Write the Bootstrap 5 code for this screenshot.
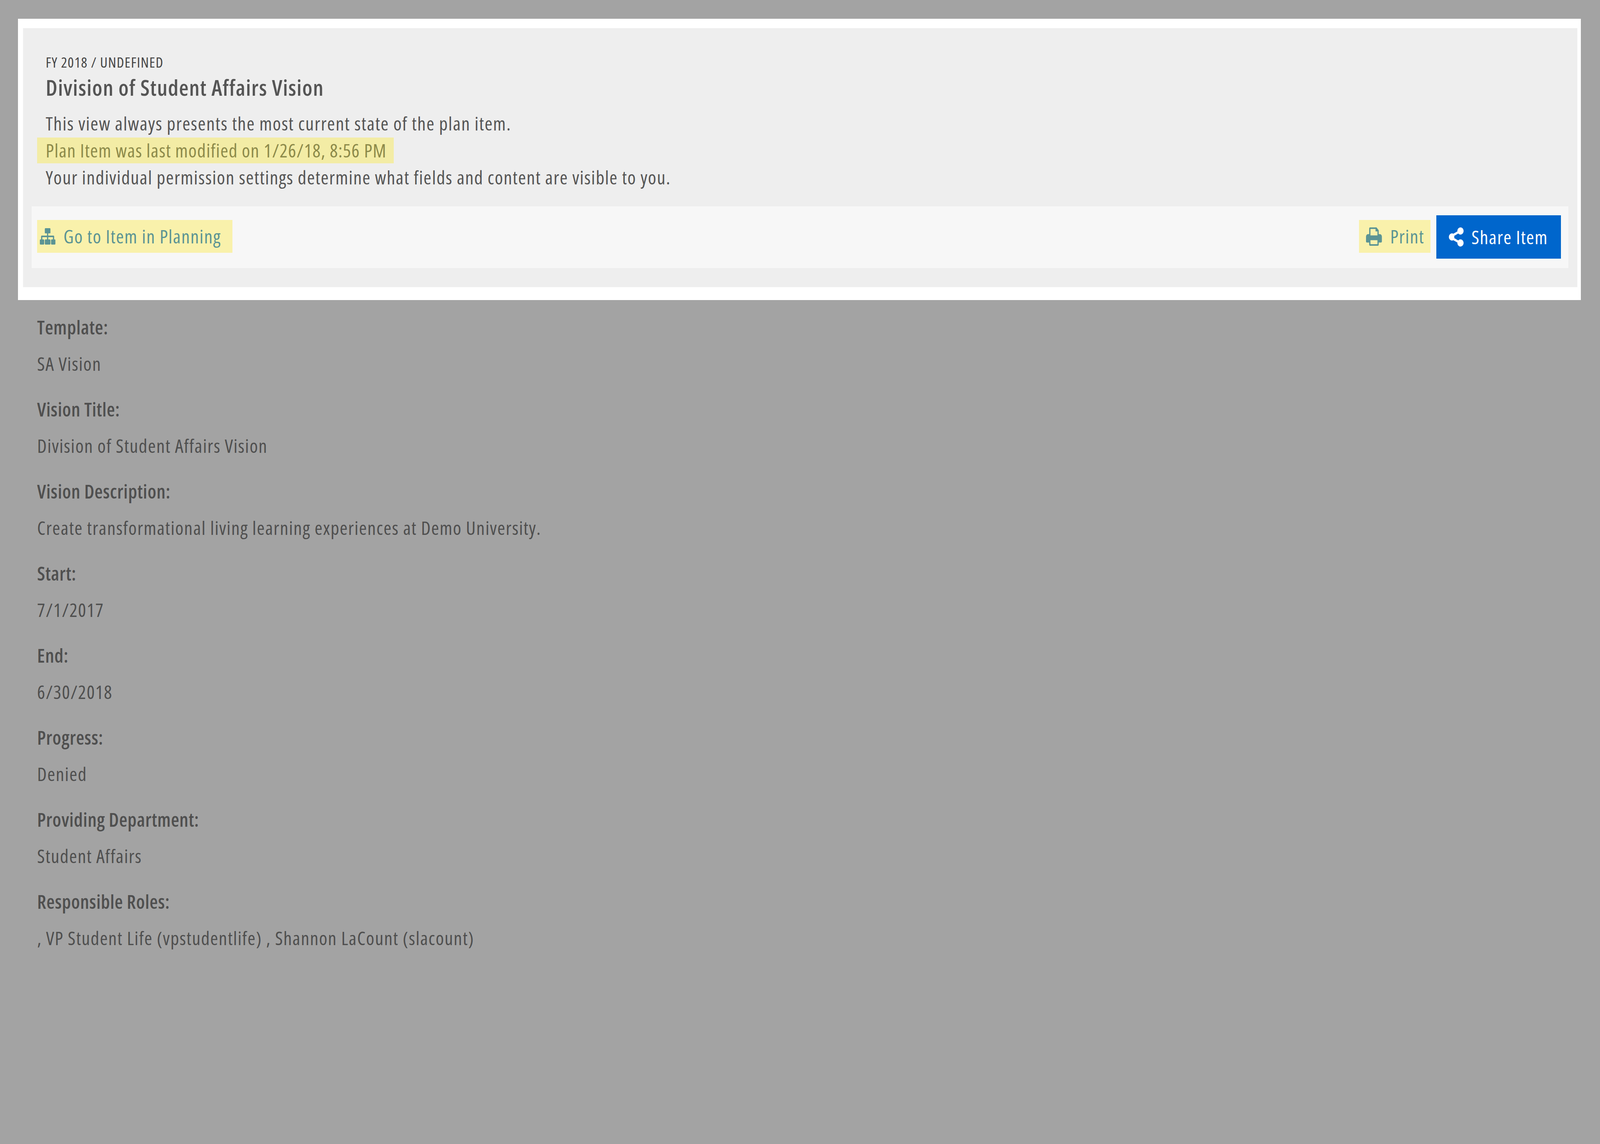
<!DOCTYPE html>
<html lang="en"><head><meta charset="utf-8"><title>Plan Item</title>
<link href="https://cdn.jsdelivr.net/npm/bootstrap@5.3.0/dist/css/bootstrap.min.css" rel="stylesheet">
<style>
html,body{height:100%}
body{background:#a3a3a3;font-family:"Open Sans","Liberation Sans",sans-serif;font-size:48px;font-stretch:81%;letter-spacing:1.67px;line-height:69.5px;color:#4f4f4f;margin:0;overflow-x:hidden}
.sheet{margin:48px 1.19vw 0 1.131vw;background:#fff;padding:24px .238vw 33px .298vw;height:720px}
.head-box{background:#eee;height:663px;padding:62px .556vw 0 .556vw}
.crumb{font-size:36.7px;line-height:50px;letter-spacing:1.5px;color:#444;margin-left:.873vw}
.heading{font-size:56px;line-height:78px;font-weight:600;font-stretch:81%;letter-spacing:1.46px;color:#555;margin:0 0 2px .873vw}
.notes{margin-top:21px;color:#555;padding-left:.337vw}
.notes p{margin:0;padding-left:.536vw;height:69px;line-height:66px}
.notes .lead-note{letter-spacing:1.79px}
.notes .hit{background:#f3eca5;color:#8d8a4a;width:22.3vw;height:66px;margin-bottom:3px;letter-spacing:1.39px}
.tool-bar{background:#f7f7f7;height:158px;margin-top:38px;padding:23px .456vw 0 .337vw}
.hl-link{background:#f9f1ab;color:#5b9494;text-decoration:none;height:84px;line-height:82px;display:flex;align-items:center;margin-top:12px}
.go-link{width:12.2vw;padding-left:.179vw}
.go-ico{width:.972vw;height:42px;margin-right:.496vw}
.print-link{width:4.464vw;padding-left:.437vw}
.print-ico{width:.992vw;height:47px;margin-right:.516vw}
.tool-end{gap:.357vw}
.share-btn{background:#0066cc;color:#fff;border:0;border-radius:0;width:7.798vw;height:111px;font-size:48px;font-stretch:81%;letter-spacing:1.67px;white-space:nowrap;padding:0 0 0 .734vw;display:flex;align-items:center;line-height:1}
.share-btn:hover{background:#0066cc;color:#fff}
.share-ico{width:.992vw;height:49px;margin-right:.476vw}
.ico{fill:currentColor;flex:none}
.fields{padding:0 0 0 2.321vw;color:#4f4f4f}
.fld{height:210px;padding-top:35px}
.fld dt{font-weight:600;letter-spacing:.75px;line-height:70px;margin:0;height:93px}
.fld dd{margin:0;line-height:70px}
</style></head>
<body>
<div class="sheet">
 <div class="head-box">
  <div class="crumb">FY 2018 / UNDEFINED</div>
  <h1 class="heading">Division of Student Affairs Vision</h1>
  <div class="notes">
   <p class="lead-note">This view always presents the most current state of the plan item.</p>
   <p class="hit">Plan Item was last modified on 1/26/18, 8:56 PM</p>
   <p>Your individual permission settings determine what fields and content are visible to you.</p>
  </div>
  <div class="tool-bar d-flex justify-content-between align-items-start">
   <a class="hl-link go-link" href="#"><svg class="ico go-ico" preserveAspectRatio="none" viewBox="0 0 50 44"><path d="M18 0h14a2 2 0 0 1 2 2v10a2 2 0 0 1-2 2h-5v6h17a2 2 0 0 1 2 2v8h2a2 2 0 0 1 2 2v10a2 2 0 0 1-2 2H38a2 2 0 0 1-2-2V32a2 2 0 0 1 2-2h4v-6H27v6h5a2 2 0 0 1 2 2v10a2 2 0 0 1-2 2H18a2 2 0 0 1-2-2V32a2 2 0 0 1 2-2h5v-6H8v6h4a2 2 0 0 1 2 2v10a2 2 0 0 1-2 2H2a2 2 0 0 1-2-2V32a2 2 0 0 1 2-2h2v-8a2 2 0 0 1 2-2h17v-6h-5a2 2 0 0 1-2-2V2a2 2 0 0 1 2-2z"/></svg><span>Go to Item in Planning</span></a>
   <div class="d-flex align-items-start tool-end">
    <a class="hl-link print-link" href="#"><svg class="ico print-ico" preserveAspectRatio="none" viewBox="0 0 50 46"><path fill-rule="evenodd" d="M10 3a3 3 0 0 1 3-3h20l7 7v10h4a6 6 0 0 1 6 6v12a3 3 0 0 1-3 3h-7v5a3 3 0 0 1-3 3H13a3 3 0 0 1-3-3v-5H3a3 3 0 0 1-3-3V23a6 6 0 0 1 6-6h4zm4 1v16h22V10h-6V4zm0 28v10h22V32z"/></svg><span>Print</span></a>
    <button class="btn share-btn" type="button"><svg class="ico share-ico" preserveAspectRatio="none" viewBox="0 0 46 48"><path d="M36 0a9 9 0 1 1-6.400 15.300L17.800 21.200a9 9 0 0 1 0 5.600l11.800 5.900a9 9 0 1 1-2.500 5.300L15.300 32.100a9 9 0 1 1 0-16.200l11.800-5.900A9 9 0 0 1 36 0z"/></svg><span>Share Item</span></button>
   </div>
  </div>
 </div>
</div>
<dl class="fields m-0">
 <div class="fld"><dt>Template:</dt><dd>SA Vision</dd></div>
 <div class="fld"><dt>Vision Title:</dt><dd>Division of Student Affairs Vision</dd></div>
 <div class="fld"><dt>Vision Description:</dt><dd>Create transformational living learning experiences at Demo University.</dd></div>
 <div class="fld"><dt>Start:</dt><dd>7/1/2017</dd></div>
 <div class="fld"><dt>End:</dt><dd>6/30/2018</dd></div>
 <div class="fld"><dt>Progress:</dt><dd>Denied</dd></div>
 <div class="fld"><dt>Providing Department:</dt><dd>Student Affairs</dd></div>
 <div class="fld"><dt>Responsible Roles:</dt><dd>, VP Student Life (vpstudentlife) , Shannon LaCount (slacount)</dd></div>
</dl>
<script src="https://cdn.jsdelivr.net/npm/bootstrap@5.3.0/dist/js/bootstrap.bundle.min.js"></script>
</body></html>
